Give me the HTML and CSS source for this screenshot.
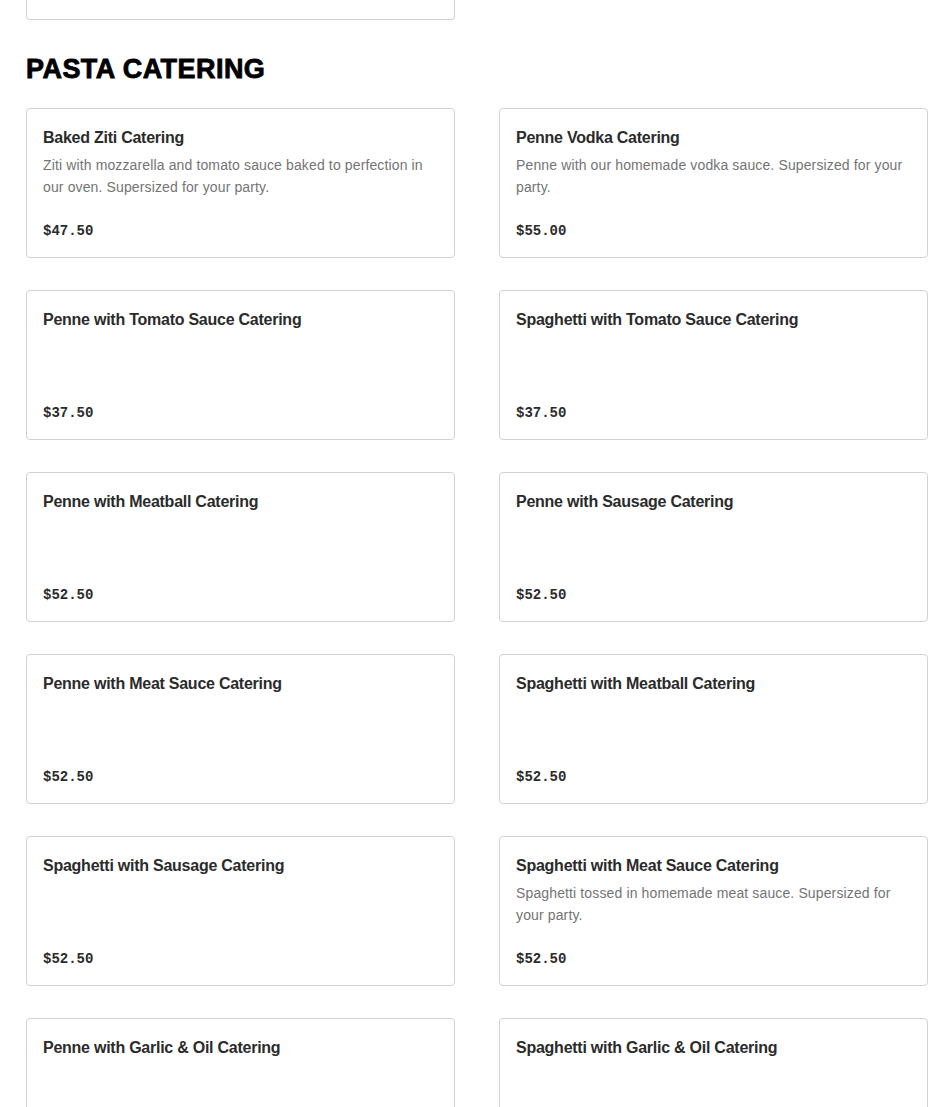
FILE: index.html
```html
<!DOCTYPE html>
<html>
<head>
<meta charset="utf-8">
<link rel="stylesheet" href="styles.css">
</head>
<body>
<div class="page">
  <div class="grid">
    <div class="card-tail"></div>
  </div>
  <h2 class="section-title">PASTA CATERING</h2>
  <div class="grid">
    <div class="card">
      <div class="name">Baked Ziti Catering</div>
      <div class="desc">Ziti with mozzarella and tomato sauce baked to perfection in our oven. Supersized for your party.</div>
      <div class="price">$47.50</div>
    </div>
    <div class="card">
      <div class="name">Penne Vodka Catering</div>
      <div class="desc">Penne with our homemade vodka sauce. Supersized for your party.</div>
      <div class="price">$55.00</div>
    </div>
    <div class="card">
      <div class="name">Penne with Tomato Sauce Catering</div>
      <div class="price">$37.50</div>
    </div>
    <div class="card">
      <div class="name">Spaghetti with Tomato Sauce Catering</div>
      <div class="price">$37.50</div>
    </div>
    <div class="card">
      <div class="name">Penne with Meatball Catering</div>
      <div class="price">$52.50</div>
    </div>
    <div class="card">
      <div class="name">Penne with Sausage Catering</div>
      <div class="price">$52.50</div>
    </div>
    <div class="card">
      <div class="name">Penne with Meat Sauce Catering</div>
      <div class="price">$52.50</div>
    </div>
    <div class="card">
      <div class="name">Spaghetti with Meatball Catering</div>
      <div class="price">$52.50</div>
    </div>
    <div class="card">
      <div class="name">Spaghetti with Sausage Catering</div>
      <div class="price">$52.50</div>
    </div>
    <div class="card">
      <div class="name">Spaghetti with Meat Sauce Catering</div>
      <div class="desc">Spaghetti tossed in homemade meat sauce. Supersized for your party.</div>
      <div class="price">$52.50</div>
    </div>
    <div class="card">
      <div class="name">Penne with Garlic &amp; Oil Catering</div>
    </div>
    <div class="card">
      <div class="name">Spaghetti with Garlic &amp; Oil Catering</div>
    </div>
  </div>
</div>
</body>
</html>
```
FILE: styles.css
```css
html, body {
  margin: 0;
  padding: 0;
  background: #ffffff;
}
body {
  font-family: "Liberation Sans", Arial, sans-serif;
  color: #2b2b2b;
}
.page {
  padding: 0 22px 0 26px;
}
.grid {
  display: grid;
  grid-template-columns: 429px 429px;
  column-gap: 44px;
  row-gap: 32px;
}
.card-tail {
  height: 19px;
  border: 1px solid #d2d2d2;
  border-top: none;
  border-radius: 0 0 4px 4px;
}
.section-title {
  margin: 31px 0 21px;
  font-size: 27px;
  line-height: 36px;
  font-weight: 700;
  letter-spacing: 0.45px;
  color: #000;
  -webkit-text-stroke: 0.8px #000;
}
.card {
  box-sizing: border-box;
  height: 150px;
  border: 1px solid #d2d2d2;
  border-radius: 4px;
  padding: 17px 16px 16px;
  display: flex;
  flex-direction: column;
}
.name {
  font-size: 16px;
  line-height: 24px;
  font-weight: 700;
  letter-spacing: -0.25px;
  color: #2b2b2b;
}
.desc {
  margin-top: 4px;
  font-size: 14px;
  line-height: 22px;
  letter-spacing: 0.13px;
  color: #747474;
}
.price {
  margin-top: auto;
  font-family: "Liberation Mono", "Courier New", monospace;
  font-size: 14px;
  line-height: 20px;
  font-weight: 700;
  color: #2b2b2b;
}
```
